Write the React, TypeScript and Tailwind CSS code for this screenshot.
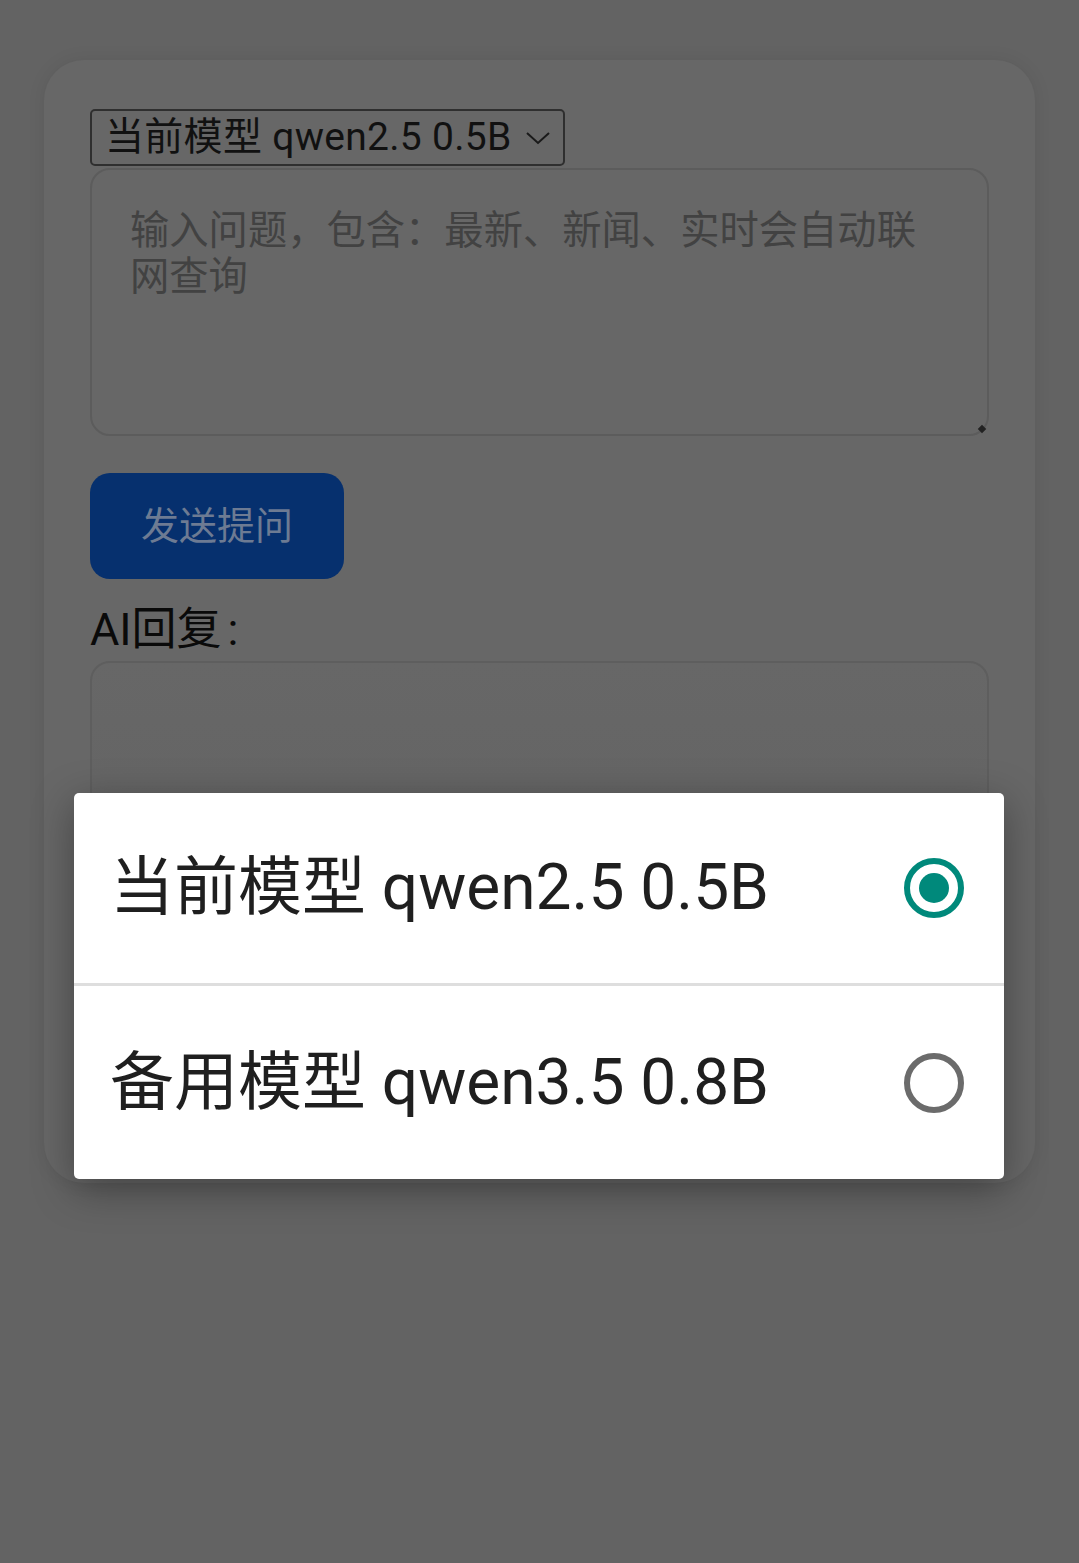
import { useState } from 'react';

const options = [
  { label: '当前模型 qwen2.5 0.5B', value: 'qwen2.5' },
  { label: '备用模型 qwen3.5 0.8B', value: 'qwen3.5' },
];

function Radio({ checked }: { checked: boolean }) {
  return (
    <svg width="64" height="64" viewBox="0 0 64 64" className="shrink-0">
      <circle cx="32" cy="32" r="27" fill="none" strokeWidth="6" stroke={checked ? '#00897b' : '#6b6b6b'} />
      {checked && <circle cx="32" cy="32" r="15" fill="#00897b" />}
    </svg>
  );
}

export default function App() {
  const [model, setModel] = useState('qwen2.5');

  return (
    <div className="min-h-[1563px] bg-[#636363] pt-[60px] px-[44px] font-['Roboto','Noto_Sans_CJK_SC',sans-serif]">
      {/* Main card (dimmed under the dialog) */}
      <div className="w-[991px] rounded-[40px] bg-[#676767] shadow-[0_0_18px_rgba(0,0,0,0.08)] px-[46px] pt-[49px] pb-[46px]">
        <div className="flex h-[57px] w-[475px] items-center rounded-[5px] border-2 border-[#2f2f2f] pl-[13px] pr-[12px]">
          <span className="text-[39px] leading-none tracking-[0.3px] text-[#111]">当前模型 qwen2.5 0.5B</span>
          <svg width="26" height="16" viewBox="0 0 26 16" fill="none" stroke="#1a1a1a" strokeWidth="2" className="ml-[13px]">
            <path d="M2 3 L13 13 L24 3" />
          </svg>
        </div>

        <div className="relative mt-[2px] h-[268px] rounded-[20px] border-2 border-[#5c5c5c] px-[38px] pt-[38px]">
          <p className="text-[39.3px] leading-[46px] text-[#424242]">
            输入问题，包含：最新、新闻、实时会自动联网查询
          </p>
          <div className="absolute bottom-[2px] right-[2px] h-[6px] w-[6px] rotate-45 bg-[#222]" />
        </div>

        <button className="mt-[37px] flex h-[106px] w-[254px] items-center justify-center rounded-[20px] bg-[#06306e] text-[38px] text-[#6d7b93]">
          发送提问
        </button>

        <div className="mt-[26px] text-[45px] leading-[50px] text-[#0a0a0a]">
          AI回复<span className="ml-[6px]">:</span>
        </div>

        <div className="mt-[6px] h-[476px] rounded-[20px] border-2 border-[#5e5e5e] bg-gradient-to-b from-[#676767] to-[#5f5f5f]" />
      </div>

      {/* Model picker dialog */}
      <div className="fixed left-[74px] top-[793px] w-[930px] rounded-[5px] bg-white shadow-[0_10px_40px_rgba(0,0,0,0.35)]">
        {options.map((opt, i) => (
          <div
            key={opt.value}
            onClick={() => setModel(opt.value)}
            className={`flex h-[193px] items-center justify-between pl-[36px] pr-[38px] ${i === 0 ? 'border-b-[3px] border-[#dedede]' : ''}`}
          >
            <span className="text-[64px] leading-none text-[#1f1f1f]">{opt.label}</span>
            <Radio checked={model === opt.value} />
          </div>
        ))}
      </div>
    </div>
  );
}
